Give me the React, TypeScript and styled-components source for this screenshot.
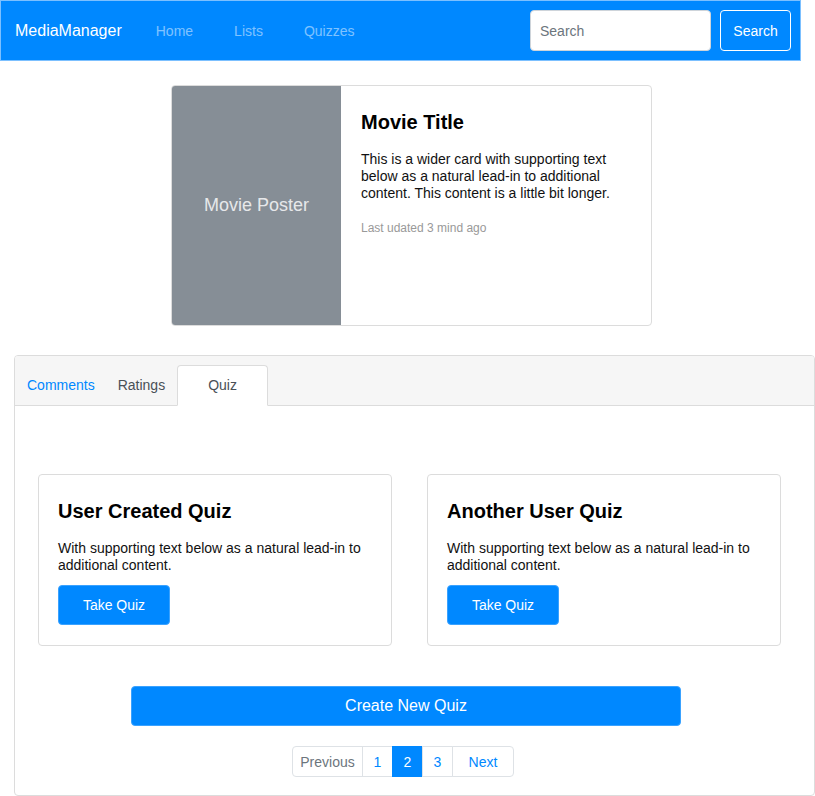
import React, { useState } from 'react'
import styled, { createGlobalStyle } from 'styled-components'

const blue = '#0088ff'

const GlobalStyle = createGlobalStyle`
  body {
    margin: 0;
    background: #fff;
    font-family: "Liberation Sans", Arial, sans-serif;
    color: #111;
  }
  * { box-sizing: border-box; }
`

const NavBar = styled.nav`
  width: 801px;
  height: 61px;
  background: ${blue};
  border: 1px solid #7cc0ff;
  display: flex;
  align-items: center;
  padding: 0 9px 0 14px;
`

const Brand = styled.a`
  color: #fff;
  font-size: 16px;
  margin-right: 14px;
`

const NavLinks = styled.div`
  display: flex;
  flex: 1;
`

const NavLink = styled.a`
  color: rgba(255, 255, 255, 0.5);
  font-size: 14px;
  padding: 0 20px;
  margin-right: 1px;
`

const SearchForm = styled.form`
  display: flex;
  gap: 9px;
  margin: 0;
`

const SearchInput = styled.input`
  width: 181px;
  height: 41px;
  border: 1px solid #ced4da;
  border-radius: 4px;
  padding: 0 9px;
  font-size: 14px;
  font-family: inherit;
  color: #495057;
  &::placeholder { color: #6c757d; }
`

const OutlineButton = styled.button`
  width: 71px;
  height: 41px;
  background: transparent;
  border: 1px solid #fff;
  border-radius: 4px;
  color: #fff;
  font-size: 14px;
  font-family: inherit;
`

const MovieCard = styled.div`
  margin: 24px 0 0 171px;
  width: 481px;
  height: 241px;
  border: 1px solid #dcdcdc;
  border-radius: 4px;
  display: flex;
  overflow: hidden;
`

const Poster = styled.div`
  width: 169px;
  background: #868e96;
  color: #e6e8ea;
  font-size: 18px;
  display: flex;
  align-items: center;
  justify-content: center;
`

const MovieBody = styled.div`
  flex: 1;
  padding: 24px 19px 24px 20px;
`

const CardTitle = styled.h5`
  margin: 0 0 17px;
  font-size: 20px;
  font-weight: bold;
  line-height: 24px;
  color: #000;
`

const CardText = styled.p<{ $gap?: number }>`
  margin: 0 0 ${({ $gap }) => $gap ?? 11}px;
  font-size: 14px;
  line-height: 17px;
  color: #111;
`

const Muted = styled.small`
  display: block;
  font-size: 12px;
  color: #999;
`

const TabCard = styled.section`
  margin: 29px 0 0 14px;
  width: 801px;
  height: 441px;
  border: 1px solid #dcdcdc;
  border-radius: 4px;
  overflow: hidden;
`

const TabHeader = styled.div`
  height: 50px;
  background: #f6f6f6;
  border-bottom: 1px solid #dcdcdc;
  display: flex;
  align-items: flex-end;
  padding-left: 1px;
`

const Tab = styled.button<{ $active?: boolean; $link?: boolean }>`
  height: ${({ $active }) => ($active ? '41px' : '40px')};
  margin-bottom: ${({ $active }) => ($active ? '-1px' : '0')};
  padding: ${({ $active }) => ($active ? '0 30px' : '0 10px')};
  margin-right: ${({ $active }) => ($active ? '0' : '1px')};
  border: 1px solid ${({ $active }) => ($active ? '#dcdcdc' : 'transparent')};
  border-bottom-color: ${({ $active }) => ($active ? '#fff' : 'transparent')};
  border-radius: 4px 4px 0 0;
  background: ${({ $active }) => ($active ? '#fff' : 'transparent')};
  color: ${({ $link }) => ($link ? blue : '#495057')};
  font-size: 14px;
  font-family: inherit;
  padding-bottom: 1px;
`

const TabBody = styled.div`
  padding: 68px 33px 0 23px;
`

const QuizGrid = styled.div`
  display: grid;
  grid-template-columns: 354px 354px;
  gap: 35px;
`

const QuizCard = styled.div`
  border: 1px solid #dcdcdc;
  border-radius: 4px;
  padding: 24px 19px 19px;
  height: 172px;
`

const PrimaryButton = styled.button<{ $wide?: boolean }>`
  width: ${({ $wide }) => ($wide ? '550px' : '112px')};
  height: 40px;
  background: ${blue};
  border: 1px solid #3aa2ff;
  border-radius: 4px;
  color: #fff;
  font-size: ${({ $wide }) => ($wide ? '16px' : '14px')};
  font-family: inherit;
`

const CreateRow = styled.div`
  margin: 40px 0 0 93px;
`

const Pager = styled.ul`
  list-style: none;
  margin: 20px 0 0 254px;
  padding: 0;
  display: flex;
`

const PageItem = styled.li<{ $active?: boolean; $disabled?: boolean; $w: number }>`
  width: ${({ $w }) => $w}px;
  height: 31px;
  display: flex;
  align-items: center;
  justify-content: center;
  font-size: 14px;
  border: 1px solid ${({ $active }) => ($active ? blue : '#dee2e6')};
  margin-left: -1px;
  background: ${({ $active }) => ($active ? blue : '#fff')};
  color: ${({ $active, $disabled }) => ($active ? '#fff' : $disabled ? '#6c757d' : blue)};
  &:first-child { border-radius: 4px 0 0 4px; margin-left: 0; }
  &:last-child { border-radius: 0 4px 4px 0; }
`

const quizzes = [
  { title: 'User Created Quiz' },
  { title: 'Another User Quiz' },
]

const pages = [
  { label: 'Previous', w: 71, disabled: true },
  { label: '1', w: 31 },
  { label: '2', w: 31, active: true },
  { label: '3', w: 31 },
  { label: 'Next', w: 62 },
]

export default function App() {
  const [tab, setTab] = useState('Quiz')
  return (
    <>
      <GlobalStyle />
      <NavBar>
        <Brand>MediaManager</Brand>
        <NavLinks>
          <NavLink>Home</NavLink>
          <NavLink>Lists</NavLink>
          <NavLink>Quizzes</NavLink>
        </NavLinks>
        <SearchForm onSubmit={(e) => e.preventDefault()}>
          <SearchInput placeholder="Search" />
          <OutlineButton type="submit">Search</OutlineButton>
        </SearchForm>
      </NavBar>

      <MovieCard>
        <Poster>Movie Poster</Poster>
        <MovieBody>
          <CardTitle>Movie Title</CardTitle>
          <CardText $gap={19}>
            This is a wider card with supporting text below as a natural lead-in to additional content. This
            content is a little bit longer.
          </CardText>
          <Muted>Last udated 3 mind ago</Muted>
        </MovieBody>
      </MovieCard>

      <TabCard>
        <TabHeader>
          <Tab $link onClick={() => setTab('Comments')}>Comments</Tab>
          <Tab onClick={() => setTab('Ratings')}>Ratings</Tab>
          <Tab $active={tab === 'Quiz'} onClick={() => setTab('Quiz')}>Quiz</Tab>
        </TabHeader>
        <TabBody>
          <QuizGrid>
            {quizzes.map((q) => (
              <QuizCard key={q.title}>
                <CardTitle>{q.title}</CardTitle>
                <CardText>With supporting text below as a natural lead-in to additional content.</CardText>
                <PrimaryButton>Take Quiz</PrimaryButton>
              </QuizCard>
            ))}
          </QuizGrid>
          <CreateRow>
            <PrimaryButton $wide>Create New Quiz</PrimaryButton>
          </CreateRow>
          <Pager>
            {pages.map((p) => (
              <PageItem key={p.label} $w={p.w} $active={p.active} $disabled={p.disabled}>
                {p.label}
              </PageItem>
            ))}
          </Pager>
        </TabBody>
      </TabCard>
    </>
  )
}
